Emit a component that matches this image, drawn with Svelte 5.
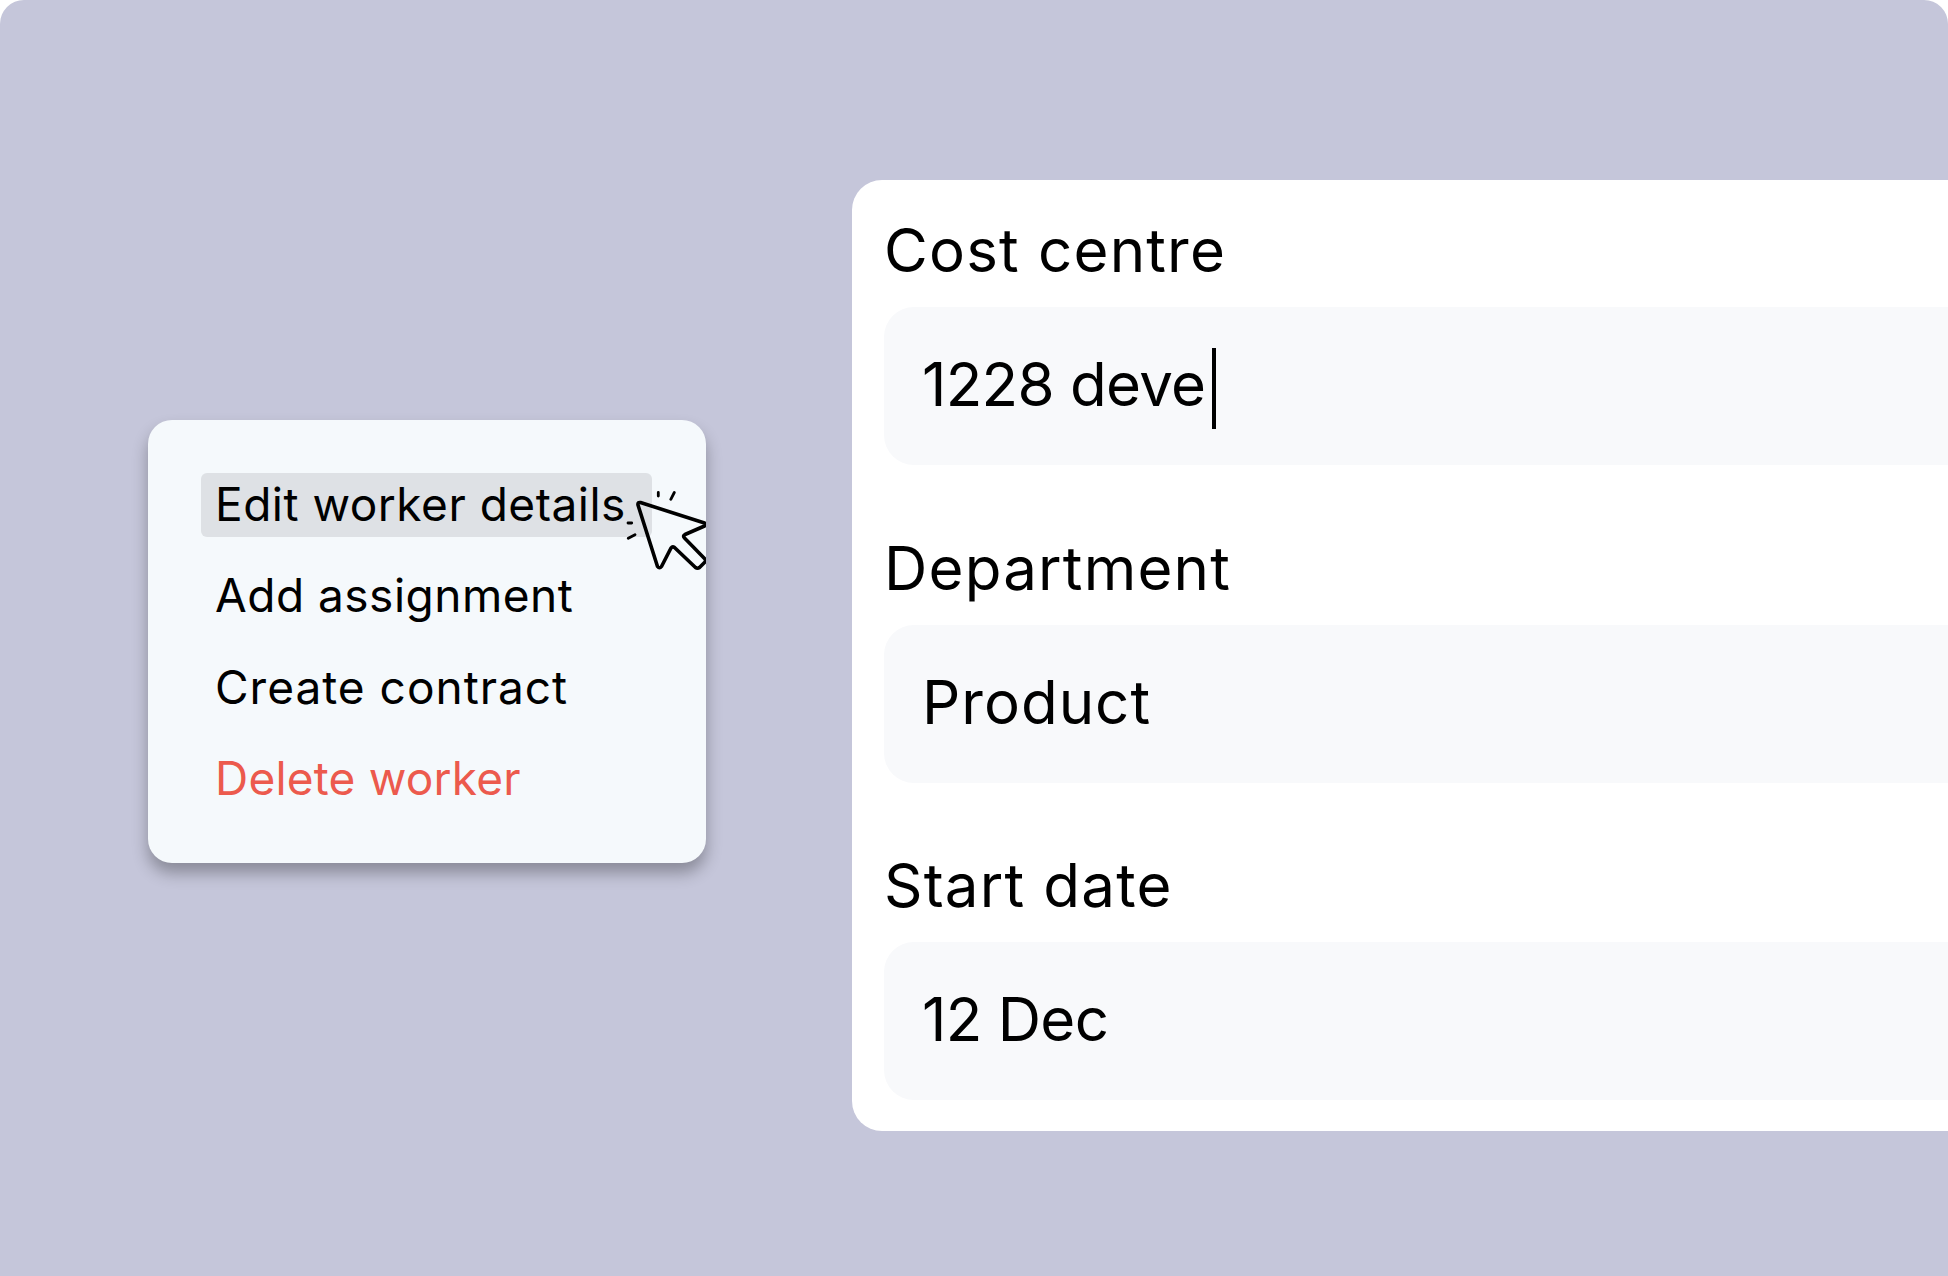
<script>
    const menuItems = [
        { label: "Edit worker details", active: true },
        { label: "Add assignment" },
        { label: "Create contract", wide: true },
        { label: "Delete worker", danger: true },
    ];

    const fields = [
        { label: "Cost centre", value: "1228 deve", numeric: true, focused: true },
        { label: "Department", value: "Product" },
        { label: "Start date", value: "12 Dec", numeric: true },
    ];
</script>

<div class="canvas">
    <div class="menu">
        {#each menuItems as item}
            <div class="menu-item" class:active={item.active} class:danger={item.danger} class:wide={item.wide}>{item.label}</div>
        {/each}

        <!-- pointer over the first item, clipped by the card edge -->
        <svg class="pointer" width="90" height="90" viewBox="625 485 90 90" fill="none" stroke="#000" stroke-linecap="round" stroke-linejoin="round">
            <path stroke-width="3.6" d="M640.5 502.5 L704.5 523 Q706.5 524.5 704.5 526 L685 534.5 Q682.5 536 684.5 538 L705 559 Q706 560.5 705 562 L699.5 567.5 Q697.5 569 695.5 567.5 L674.5 547.5 Q672.5 546 671 548 L661.5 566.5 Q659.5 569 657.5 566.5 L638 505 Q637.5 502 640.5 502.5 Z" />
            <path stroke-width="2.8" d="M658.3 492.5 V496 M674.3 492.5 L670.8 499.3 M628 523 H631.7 M628.3 538.3 L635 534.7" />
        </svg>
    </div>

    <div class="panel">
        {#each fields as field}
            <div class="field">
                <div class="field-label">{field.label}</div>
                <div class="field-input" class:numeric={field.numeric}>
                    {field.value}{#if field.focused}<span class="caret"></span>{/if}
                </div>
            </div>
        {/each}
    </div>
</div>

<style>
    :global(body) {
        background: #fff;
    }

    .canvas {
        width: 1948px;
        height: 1276px;
        box-sizing: border-box;
        padding: 180px 0 0 148px;
        display: flex;
        align-items: flex-start;
        overflow: hidden;
        background: #c5c6da;
        border-radius: 24px 24px 0 0;
        font-family: "Inter", sans-serif;
        color: #000;
    }

    /* Context menu */
    .menu {
        position: relative;
        width: 558px;
        height: 443px;
        box-sizing: border-box;
        flex: none;
        margin-top: 240px;
        padding: 53px 0 0 53px;
        background: #f5f9fc;
        border-radius: 24px;
        box-shadow: 0 10px 16px rgba(0, 0, 0, 0.3);
    }

    .menu-item {
        width: 451px;
        height: 64px;
        box-sizing: border-box;
        margin-bottom: 27.3px;
        padding-left: 14px;
        border-radius: 6px;
        font-size: 46px;
        line-height: 62px;
        letter-spacing: 0.5px;
        white-space: nowrap;
    }

    .menu-item.active {
        background: #dee1e5;
    }

    .menu-item.wide {
        letter-spacing: 1px;
    }

    .menu-item.danger {
        color: #ec5a4d;
        letter-spacing: 0.2px;
    }

    .pointer {
        position: absolute;
        left: 477px;
        top: 65px;
        clip-path: inset(0 9px 0 0);
    }

    /* Form panel */
    .panel {
        flex: 1;
        height: 951px;
        box-sizing: border-box;
        margin-left: 146px;
        padding: 0 0 0 32px;
        background: #fff;
        border-radius: 30px 0 0 30px;
    }

    .field {
        padding-top: 32px;
        height: 317.5px;
        box-sizing: border-box;
    }

    .field-label {
        font-size: 60px;
        line-height: 72px;
        letter-spacing: 1.2px;
        margin-bottom: 23px;
        padding-top: 2px;
        height: 70px;
    }

    .field-input {
        display: flex;
        align-items: center;
        height: 158px;
        box-sizing: border-box;
        padding: 0 0 4px 38px;
        background: #f8f9fb;
        border-radius: 30px 0 0 30px;
        font-size: 60px;
        letter-spacing: 1px;
    }

    .field-input.numeric {
        letter-spacing: -0.7px;
    }

    .caret {
        width: 4px;
        height: 81px;
        margin: 9px 0 0 7px;
        background: #000;
    }
</style>
